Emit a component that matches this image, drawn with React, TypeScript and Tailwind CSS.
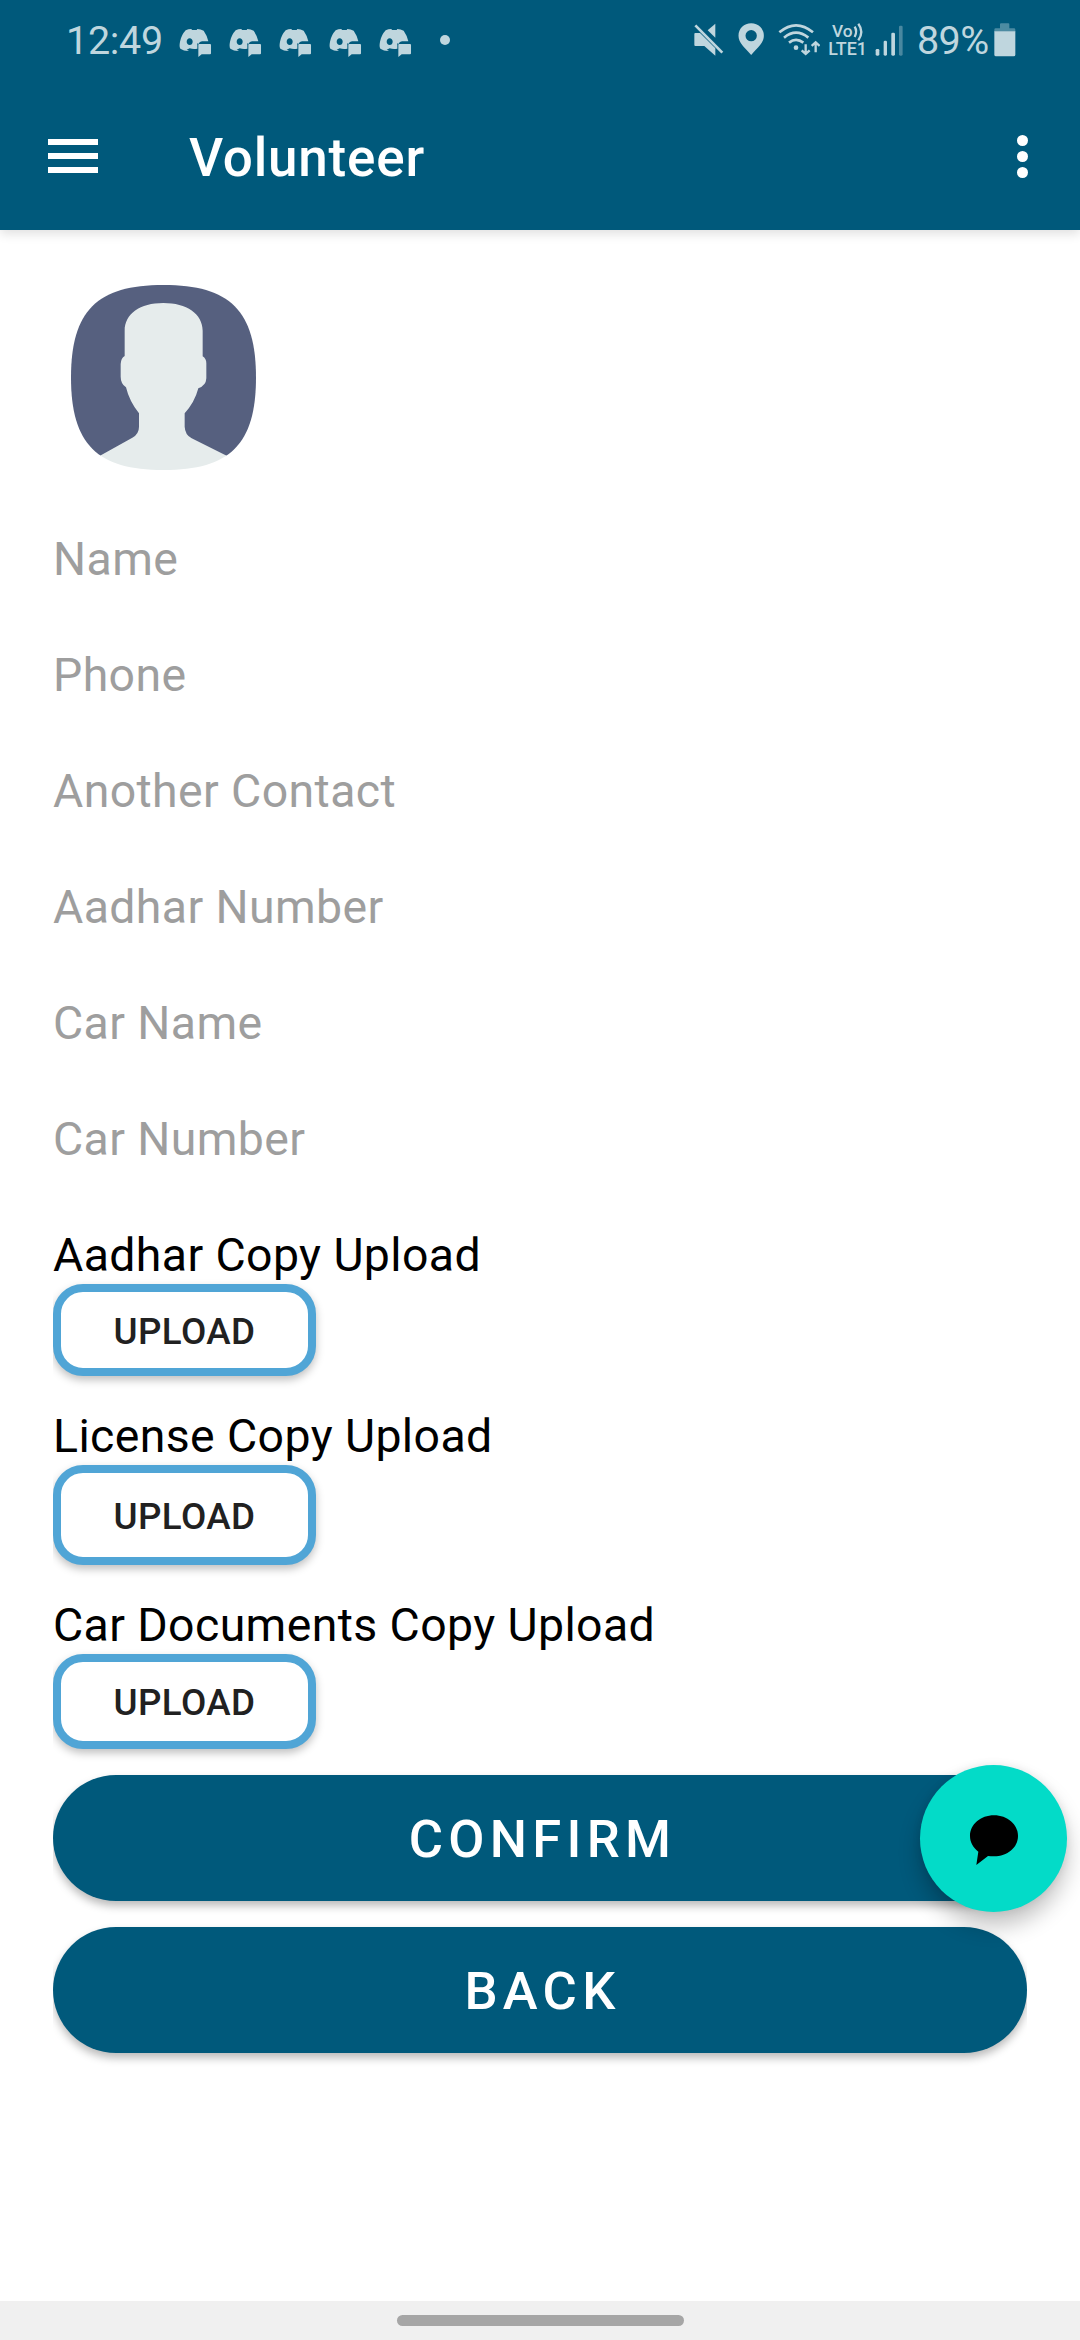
import type { ReactNode } from "react";

const SQUIRCLE =
  "M93 352.5C93 152.7 170.7 75 370.5 75S648 152.7 648 352.5 570.3 630 370.5 630 93 552.3 93 352.5Z";

function ChatHeadIcon() {
  return (
    <svg viewBox="537 84 98 90" className="h-[30px] w-[32.7px]" fill="currentColor">
      <path
        fillRule="evenodd"
        d="M557 91Q565 87 574 87L576 90H590L592 87Q602 88 611 92Q621 106 625 124H606Q599 124 595 132Q590 126 592 134V146Q580 148 569 145L560 149L567 153Q553 154 541 146Q537 140 540 125Q544 105 557 91ZM569 115C564 115 560 120 560 125S564 135 569 135 578 131 578 125 574 115 569 115Z"
      />
      <path d="M597 132H630Q633 132 633 135V160Q633 163 630 163H605L595 171V135Q595 132 597 132Z" />
    </svg>
  );
}

function MuteIcon() {
  return (
    <svg viewBox="100 68 90 100" className="h-[33.3px] w-[30px]" fill="currentColor">
      <path d="M164 70V112L141 90Z" />
      <path d="M101 100Q101 98 104 98H118L164 144V166L131 137H104Q101 137 101 134Z" />
      <path d="M104 75L185 157" stroke="currentColor" strokeWidth="8" />
    </svg>
  );
}

function PinIcon() {
  return (
    <svg viewBox="232 70 80 98" className="h-[32.7px] w-[26.7px]" fill="currentColor">
      <path
        fillRule="evenodd"
        d="M271.500 71C250 71 233.500 87 233.500 108C233.500 130 252 143 271.500 166C291 143 309.500 130 309.500 108C309.500 87 293 71 271.500 71ZM271.500 91A17 17 0 1 1 271.500 125A17 17 0 1 1 271.500 91Z"
      />
    </svg>
  );
}

function WifiIcon() {
  return (
    <svg viewBox="352 68 128 100" className="h-[33.3px] w-[42.7px]" fill="none" stroke="currentColor" strokeWidth="8">
      <path d="M356 96Q406 54 457 96" />
      <path d="M370 112Q406 82 443 112" />
      <path d="M385 127Q406 110 428 127" />
      <circle cx="406" cy="142" r="7" fill="currentColor" stroke="none" />
      <path d="M435 132V161M423 150L435 161L447 150" strokeWidth="7" />
      <path d="M465 156V126M453 137L465 126L477 137" strokeWidth="7" />
    </svg>
  );
}

function NetworkLabel() {
  return (
    <svg viewBox="500 66 124 104" className="h-[34.7px] w-[41.3px] overflow-visible" fill="currentColor">
      <text x="515" y="111" fontSize="52" fontWeight="500" textLength="62" lengthAdjust="spacingAndGlyphs">
        Vo
      </text>
      <text x="504" y="165" fontSize="53" fontWeight="500" textLength="116" lengthAdjust="spacingAndGlyphs">
        LTE1
      </text>
      <path d="M583 80Q592 94 583 111M594 71Q612 95 594 121" fill="none" stroke="currentColor" strokeWidth="7" />
    </svg>
  );
}

function SignalIcon() {
  return (
    <svg viewBox="643 68 88 100" className="h-[33.3px] w-[29.3px]" fill="currentColor">
      <rect x="645" y="146" width="11" height="20" rx="4" />
      <rect x="669" y="121" width="10" height="45" rx="4" />
      <rect x="692" y="97" width="11" height="69" rx="4" />
      <rect x="715" y="76" width="11" height="90" rx="4" opacity=".38" />
    </svg>
  );
}

function BatteryIcon() {
  return (
    <svg viewBox="1001 68 66 102" className="h-[34px] w-[22px]" fill="currentColor">
      <path d="M1019 84V72Q1019 69 1022 69H1044Q1047 69 1047 72V84H1061Q1065 84 1065 88V94H1002V88Q1002 84 1006 84Z" opacity=".4" />
      <path d="M1002 93H1065V163Q1065 168 1060 168H1007Q1002 168 1002 163Z" />
    </svg>
  );
}

function StatusBar() {
  return (
    <div className="flex h-[78px] items-center pt-[1px] pl-[66px] pr-[64px] text-[#bfd6de]">
      <span className="w-[113px] pt-[3px] text-[39.5px] leading-none tracking-[-0.3px]">12:49</span>
      <div className="flex gap-[17.3px] pt-[7px]">
        {[0, 1, 2, 3, 4].map((i) => (
          <ChatHeadIcon key={i} />
        ))}
      </div>
      <span className="mt-[1px] ml-[28.500px] size-[10px] rounded-full bg-current" />
      <div className="ml-auto flex items-center">
        <MuteIcon />
        <span className="w-[14px]" />
        <PinIcon />
        <span className="w-[13.300px]" />
        <WifiIcon />
        <span className="w-[6.700px]" />
        <NetworkLabel />
        <span className="w-[6.400px]" />
        <SignalIcon />
        <span className="ml-[13px] w-[77px] pt-[3px] text-[39.5px] leading-none tracking-[-0.6px] whitespace-nowrap">89%</span>
        <BatteryIcon />
      </div>
    </div>
  );
}

function AppBar() {
  return (
    <div className="flex h-[152px] items-center pl-[48px] pr-[52px] text-white">
      <button aria-label="Menu" className="mt-[4px] flex w-[50px] flex-col gap-[8.500px]">
        <span className="h-[5.500px] bg-white" />
        <span className="h-[5.500px] bg-white" />
        <span className="h-[5.500px] bg-white" />
      </button>
      <h1 className="ml-[91px] pt-[8px] text-[53px] leading-none font-medium tracking-[0.8px]">Volunteer</h1>
      <button aria-label="More options" className="mt-[5px] ml-auto flex flex-col gap-[5px]">
        <span className="size-[11px] rounded-full bg-white" />
        <span className="size-[11px] rounded-full bg-white" />
        <span className="size-[11px] rounded-full bg-white" />
      </button>
    </div>
  );
}

function Avatar() {
  return (
    <svg viewBox="93 75 555 555" className="ml-[18px] size-[185px]">
      <defs>
        <clipPath id="squircle">
          <path d={SQUIRCLE} />
        </clipPath>
      </defs>
      <g clipPath="url(#squircle)">
        <path d="M93 75H648V587H93Z" fill="#56607f" />
        <path
          fill="#e6ecec"
          d="M370 129C440 129 488 162 488 212V289Q499 296 499 310V355Q498 377 475 385Q464 427 434 460V500Q435 524 455 535L560 587V640H180V587L277 533Q297 522 297 500V460Q268 424 258 382Q242 371 242 350V312Q243 294 254 288V212C254 162 300 129 370 129Z"
        />
      </g>
    </svg>
  );
}

function Field({ label }: { label: string }) {
  return <div className="flex h-[116px] items-center text-[46.400px] leading-[56px] tracking-[0.4px] text-[#9e9e9e]">{label}</div>;
}

function Upload({ label, className }: { label: string; className: string }) {
  return (
    <div className="flex flex-col items-start">
      <div className="h-[56px] text-[46.400px] leading-[54px] tracking-[0.4px] text-black">{label}</div>
      <button
        className={`${className} flex w-[263px] items-center justify-center rounded-[30px] border-8 border-[#50a5d6] bg-white pt-[3px] text-[36.750px] font-medium tracking-[0.4px] text-[#212121] shadow-[0_4px_8px_rgba(0,0,0,0.25)]`}
      >
        UPLOAD
      </button>
    </div>
  );
}

function PillButton({ children }: { children: ReactNode }) {
  return (
    <button className="flex h-[126px] w-full items-center justify-center rounded-full bg-[#00597b] pt-[3px] pl-[5px] text-[52.500px] font-medium tracking-[5.300px] text-white shadow-[0_5px_8px_rgba(0,0,0,0.27)]">
      {children}
    </button>
  );
}

export default function App() {
  return (
    <div className="relative flex h-[2340px] w-[1080px] flex-col overflow-hidden bg-white font-[Roboto,sans-serif]">
      <header className="h-[230px] shrink-0 bg-[#00597b] shadow-[0_4px_10px_rgba(0,0,0,0.12)]">
        <StatusBar />
        <AppBar />
      </header>
      <main className="mx-[53px] flex flex-1 flex-col overflow-x-clip overflow-y-visible pt-[55px]">
        <Avatar />
        <div className="mt-[31px]">
          {["Name", "Phone", "Another Contact", "Aadhar Number", "Car Name", "Car Number"].map((label) => (
            <Field key={label} label={label} />
          ))}
        </div>
        <div className="mt-[31px] flex flex-col">
          <Upload label="Aadhar Copy Upload" className="h-[92px]" />
          <div className="h-[33px]" />
          <Upload label="License Copy Upload" className="h-[100px]" />
          <div className="h-[33px]" />
          <Upload label="Car Documents Copy Upload" className="h-[95px]" />
        </div>
        <div className="mt-[26px] flex flex-col gap-[26px]">
          <PillButton>CONFIRM</PillButton>
          <PillButton>BACK</PillButton>
        </div>
      </main>
      <button
        aria-label="Chat"
        className="absolute top-[1765px] left-[920px] flex size-[147px] items-center justify-center rounded-full bg-[#03dbc8] shadow-[0_14px_22px_rgba(0,0,0,0.24),0_0_8px_rgba(0,0,0,0.08)]"
      >
        <svg viewBox="927 222 150 156" className="mt-[3px] h-[52px] w-[50px]">
          <path d="M1002 226C1042 226 1074 253 1074 288S1042 349 1002 349Q992 349 984 348L949 375L955 335C939 323 930 306 930 288C930 253 962 226 1002 226Z" />
        </svg>
      </button>
      <footer className="flex h-[39px] shrink-0 justify-center bg-[#f0f0f0] pt-[14px]">
        <div className="h-[11px] w-[287px] rounded-full bg-[#a6a6a6]" />
      </footer>
    </div>
  );
}
